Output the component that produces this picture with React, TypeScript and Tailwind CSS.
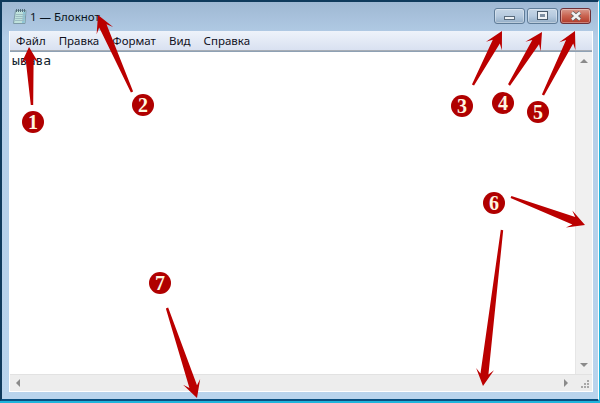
import React from 'react';

const menuItems = ['Файл', 'Правка', 'Формат', 'Вид', 'Справка'];

// tail x, tail y, tip x, tip y
const arrows = [
  [32, 105, 29, 47],
  [132, 92, 98, 15],
  [473, 85, 502, 31],
  [509, 85, 542, 32],
  [543, 95, 575, 31],
  [511, 197, 585, 225],
  [502, 230, 483, 386],
  [167, 308, 197, 398],
];

const badges = [
  { n: 1, className: 'left-[22px] top-[111px]' },
  { n: 2, className: 'left-[132px] top-[94px]' },
  { n: 3, className: 'left-[451px] top-[95px]' },
  { n: 4, className: 'left-[492px] top-[92px]' },
  { n: 5, className: 'left-[527px] top-[101px]' },
  { n: 6, className: 'left-[483px] top-[192px]' },
  { n: 7, className: 'left-[149px] top-[272px]' },
];

const arrowPoints = (x1: number, y1: number, x2: number, y2: number) => {
  const len = Math.hypot(x2 - x1, y2 - y1);
  const ux = (x2 - x1) / len;
  const uy = (y2 - y1) / len;
  const nx = -uy;
  const ny = ux;
  const headLen = 17;
  const bx = x2 - ux * headLen;
  const by = y2 - uy * headLen;
  // the head's back edge sits a little behind where the shaft joins it
  const cx = x2 - ux * (headLen - 5);
  const cy = y2 - uy * (headLen - 5);
  const pts = [
    [x1 + nx * 1.2, y1 + ny * 1.2],
    [cx + nx * 4, cy + ny * 4],
    [bx + nx * 9, by + ny * 9],
    [x2, y2],
    [bx - nx * 9, by - ny * 9],
    [cx - nx * 4, cy - ny * 4],
    [x1 - nx * 1.2, y1 - ny * 1.2],
  ];
  return pts.map((p) => p.join(',')).join(' ');
};

const NotepadIcon = () => (
  <svg width="16" height="17" viewBox="0 0 16 17" className="shrink-0">
    <path d="M3.500 2.500h10.500l-1 13h-11.500z" fill="#bfe2dc" stroke="#7d9aa6" />
    <path d="M11 3.500h2.500l-1 11.500h-2.500z" fill="#8fc6d6" />
    <path d="M3.800 6.500h9M3.600 8.500h9M3.300 10.500h9M3 12.500h9" stroke="#9dbcc2" />
    <path d="M4.500 1v3M6.500 1v3M8.500 1v3M10.500 1v3M12.500 1v3" stroke="#56707e" />
  </svg>
);

const CaptionButton = ({ className, children }: { className: string; children: React.ReactNode }) => (
  <div className={`h-[16px] flex items-center justify-center rounded-[3px] border shadow-[inset_0_0_0_1px_rgba(255,255,255,0.35)] ${className}`}>
    {children}
  </div>
);

export default function App() {
  return (
    <div className="relative w-[600px] h-[403px] overflow-hidden bg-[#1fb4dc] font-['Noto_Sans',sans-serif]">
      <div className="w-[599px] h-[401px] flex flex-col border-l-2 border-t-2 border-b-2 border-l-[#0f3a5c] border-t-[#0f3a5c] border-b-[#0b4f80] border-r border-r-white bg-gradient-to-b from-[#9fb8d3] via-[#b3cde7] via-[9%] to-[#b9d4ed]">
        <div className="h-[29px] shrink-0 flex items-center pl-[10px] pr-[7px]">
          <NotepadIcon />
          <span className="ml-[2px] text-[11.5px] text-[#0a1520] leading-none">1 — Блокнот</span>
          <div className="ml-auto flex gap-[2px] -mt-[2px]">
            <CaptionButton className="w-[31px] border-[#5f7c98] bg-gradient-to-b from-[#c6d6e6] via-[#b6cadf] to-[#93adc6]">
              <div className="w-[11px] h-[4px] mt-[5px] bg-[#eef2f6] border border-[#5a6b7c]" />
            </CaptionButton>
            <CaptionButton className="w-[31px] border-[#5f7c98] bg-gradient-to-b from-[#c6d6e6] via-[#b6cadf] to-[#93adc6]">
              <div className="w-[11px] h-[9px] bg-[#eef2f6] border border-[#47596b] flex items-center justify-center">
                <div className="w-[5px] h-[3px] bg-[#7f90a3]" />
              </div>
            </CaptionButton>
            <CaptionButton className="w-[31px] border-[#6e3038] bg-gradient-to-b from-[#d89a8e] via-[#c9624f] to-[#b03a2a]">
              <svg width="14" height="10" viewBox="0 0 14 10">
                <path d="M3 1.500 11 8.500M11 1.500 3 8.500" stroke="#5e5e5e" strokeWidth="4" />
                <path d="M3 1.500 11 8.500M11 1.500 3 8.500" stroke="#f2f2f2" strokeWidth="2.500" />
              </svg>
            </CaptionButton>
          </div>
        </div>
        <div className="ml-[7px] mr-[5px] mb-[7px] flex-1 min-h-0 flex flex-col border-x border-b border-white">
          <div className="h-[20px] shrink-0 flex items-center gap-[13px] pl-[6px] bg-gradient-to-b from-[#eef3fa] to-[#d9e1f1] border-b border-[#a7adb5]">
            {menuItems.map((item) => (
              <span key={item} className="text-[11.5px] leading-none text-[#10101c]">{item}</span>
            ))}
          </div>
          <div className="flex-1 min-h-0 flex flex-col bg-white border-t border-[#8ea1b4]">
            <div className="flex-1 min-h-0 flex">
              <div className="flex-1 pl-[2px] pt-[1px] font-['DejaVu_Sans_Mono',monospace] text-[13px] leading-[15px] text-[#10222e]">ывава</div>
              <div className="w-[17px] flex flex-col items-center justify-between py-[7px] bg-[#f0f0f0] border-l border-[#e6e6e6]">
                <div className="w-0 h-0 border-x-[4px] border-x-transparent border-b-[4px] border-b-[#8a8a8a]" />
                <div className="w-0 h-0 border-x-[4px] border-x-transparent border-t-[4px] border-t-[#8a8a8a]" />
              </div>
            </div>
            <div className="h-[17px] shrink-0 flex items-center bg-[#ededed] border-t border-[#e2e2e2]">
              <div className="flex-1 flex items-center justify-between pl-[6px] pr-[7px]">
                <div className="w-0 h-0 border-y-[4px] border-y-transparent border-r-[4px] border-r-[#8a8a8a]" />
                <div className="w-0 h-0 border-y-[4px] border-y-transparent border-l-[4px] border-l-[#8a8a8a]" />
              </div>
              <div className="w-[17px] h-full flex items-end justify-end pr-[2px] pb-[2px]">
                <svg width="9" height="9" viewBox="0 0 9 9" fill="#a8a8a8">
                  <rect x="6" y="0" width="2" height="2" />
                  <rect x="3" y="3" width="2" height="2" />
                  <rect x="6" y="3" width="2" height="2" />
                  <rect x="0" y="6" width="2" height="2" />
                  <rect x="3" y="6" width="2" height="2" />
                  <rect x="6" y="6" width="2" height="2" />
                </svg>
              </div>
            </div>
          </div>
        </div>
      </div>

      {/* annotations over the screenshot */}
      <svg width="600" height="403" className="absolute inset-0" fill="#bb0000">
        {arrows.map(([x1, y1, x2, y2], i) => (
          <polygon key={i} points={arrowPoints(x1, y1, x2, y2)} />
        ))}
      </svg>
      {badges.map((b) => (
        <div
          key={b.n}
          className={`absolute w-[22px] h-[22px] rounded-full bg-[#b00000] flex items-center justify-center font-['Liberation_Serif',serif] font-bold text-[20px] leading-none text-[#fff6e0] ${b.className}`}
        >
          {b.n}
        </div>
      ))}
    </div>
  );
}
